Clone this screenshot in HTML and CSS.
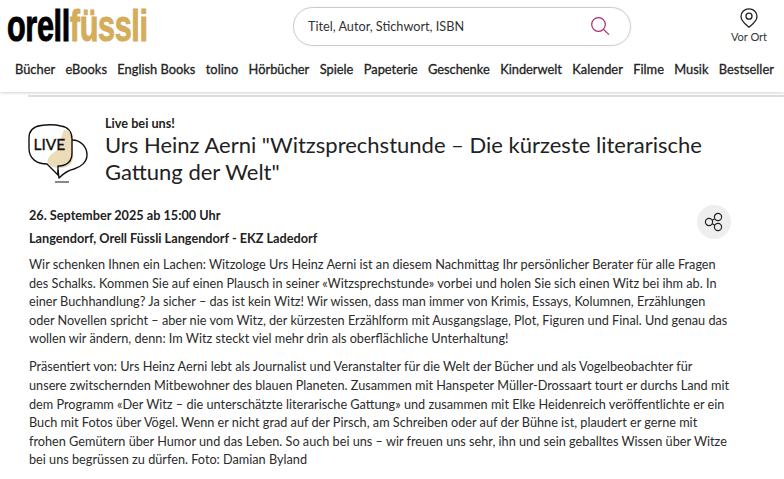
FILE: index.html
```html
<!DOCTYPE html>
<html lang="de">
<head>
  <title>Urs Heinz Aerni - Orell Füssli</title>
  <link rel="stylesheet" href="styles.css">
</head>
<body>
  <header class="site-header">
    <div class="header-top">
      <a class="logo"><span class="logo-inner"><span class="logo-black">orell</span><span class="logo-gold">füssli</span></span></a>
      <div class="search">
        <span class="search-text">Titel, Autor, Stichwort, ISBN</span>
        <svg class="search-icon" width="20" height="20" viewBox="0 0 20 20" fill="none" stroke="#a8286e" stroke-width="1.2">
          <circle cx="8.5" cy="8.5" r="6.8"/>
          <path d="M13.4 13.4 L19 18.6"/>
        </svg>
      </div>
      <div class="store">
        <svg width="18" height="20" viewBox="0 0 18 20" fill="none" stroke="#222" stroke-width="1.3">
          <path d="M9 19.2 C5.5 16.2 1 13 1 8.4 A8 7.6 0 0 1 17 8.4 C17 13 12.5 16.2 9 19.2 Z"/>
          <circle cx="9" cy="8.2" r="3"/>
        </svg>
        <span>Vor Ort</span>
      </div>
    </div>
    <nav class="main-nav">
      <a>Bücher</a>
      <a>eBooks</a>
      <a>English Books</a>
      <a>tolino</a>
      <a>Hörbücher</a>
      <a>Spiele</a>
      <a>Papeterie</a>
      <a>Geschenke</a>
      <a>Kinderwelt</a>
      <a>Kalender</a>
      <a>Filme</a>
      <a>Musik</a>
      <a>Bestseller</a>
    </nav>
  </header>

  <main class="content">
    <div class="event-head">
      <svg class="live-icon" width="60" height="60" viewBox="0 0 60 60" fill="none" stroke="#111" stroke-width="1.4">
        <path d="M36 6 C42 5 45 12 44 22 C43 26 46 30 45 35 C44 41 38 44 33 44 C28 44 22 43 20 39 C18 35 23 30 28 27 C33 23 32 14 36 6 Z" fill="#ecdcb8" stroke="none"/>
        <path d="M13 1.5 C20 0.5 27 0.5 33 2 C40 3 44 8 44 15 V29 C44 37 40 41 32 42 C31 42 30 42 30 42 V51 L19 40 C9 40 1 35 1 24 V14 C1 6 6 2.5 13 1.5 Z" stroke-linejoin="round"/>
        <path d="M44 16 C53 16 59 23 59 31 C59 38 53 43 46 45 C41 46 36 49 31 54 L30 46" stroke-linejoin="round"/>
        <path d="M27 58 H41" stroke="#555"/>
        <text x="5.5" y="26" class="live-text" fill="#111" stroke="#111" stroke-width="0.35">LIVE</text>
      </svg>
      <div>
        <div class="event-kicker">Live bei uns!</div>
        <h1 class="event-title">Urs Heinz Aerni "Witzsprechstunde – Die kürzeste literarische Gattung der Welt"</h1>
      </div>
    </div>

    <div class="event-meta">
      <div>
        <p class="meta-line">26. September 2025 ab 15:00 Uhr</p>
        <p class="meta-line">Langendorf, Orell Füssli Langendorf - EKZ Ladedorf</p>
      </div>
      <span class="share-btn">
        <svg width="20" height="20" viewBox="0 0 20 20" fill="none" stroke="#222" stroke-width="1.2">
          <circle cx="5" cy="10" r="3.6"/>
          <circle cx="14" cy="5" r="3.6"/>
          <circle cx="14" cy="15" r="3.6"/>
          <path d="M8.2 8.3 L10.9 6.8 M8.2 11.7 L10.9 13.2"/>
        </svg>
      </span>
    </div>

    <p class="event-text">Wir schenken Ihnen ein Lachen: Witzologe Urs Heinz Aerni ist an diesem Nachmittag Ihr persönlicher Berater für alle Fragen des Schalks. Kommen Sie auf einen Plausch in seiner «Witzsprechstunde» vorbei und holen Sie sich einen Witz bei ihm ab. In einer Buchhandlung? Ja sicher – das ist kein Witz! Wir wissen, dass man immer von Krimis, Essays, Kolumnen, Erzählungen oder Novellen spricht – aber nie vom Witz, der kürzesten Erzählform mit Ausgangslage, Plot, Figuren und Final. Und genau das wollen wir ändern, denn: Im Witz steckt viel mehr drin als oberflächliche Unterhaltung!</p>
    <p class="event-text">Präsentiert von: Urs Heinz Aerni lebt als Journalist und Veranstalter für die Welt der Bücher und als Vogelbeobachter für unsere zwitschernden Mitbewohner des blauen Planeten. Zusammen mit Hanspeter Müller-Drossaart tourt er durchs Land mit dem Programm «Der Witz – die unterschätzte literarische Gattung» und zusammen mit Elke Heidenreich veröffentlichte er ein Buch mit Fotos über Vögel. Wenn er nicht grad auf der Pirsch, am Schreiben oder auf der Bühne ist, plaudert er gerne mit frohen Gemütern über Humor und das Leben. So auch bei uns – wir freuen uns sehr, ihn und sein geballtes Wissen über Witze bei uns begrüssen zu dürfen. Foto: Damian Byland</p>
  </main>
</body>
</html>
```

FILE: styles.css
```css
html, body {
  margin: 0;
  padding: 0;
  height: 479px;
  overflow: hidden;
}

body {
  font-family: Lato, "Open Sans", sans-serif;
  color: #222;
  background-color: #fff;
}

.site-header {
  height: 92px;
  box-shadow: 0 1px 3px rgba(0, 0, 0, 0.18);
}

.header-top {
  display: flex;
  height: 52px;
  padding-top: 7px;
  box-sizing: border-box;
}

.logo {
  width: 293px;
  padding-left: 7px;
  box-sizing: border-box;
}

.logo-inner {
  display: inline-block;
  margin-top: -4px;
  font-family: "Liberation Sans", sans-serif;
  font-weight: bold;
  font-size: 44px;
  line-height: 46px;
  letter-spacing: -0.5px;
  transform: scaleX(0.695);
  transform-origin: left center;
  -webkit-text-stroke: 1px currentColor;
  white-space: nowrap;
}

.logo-black {
  color: #000;
}

.logo-gold {
  color: #d4ac5a;
}

.search {
  display: flex;
  align-items: center;
  justify-content: space-between;
  width: 338px;
  height: 39px;
  padding: 0 20px 1px 14px;
  box-sizing: border-box;
  border: 1px solid #ccc;
  border-radius: 20px;
  box-shadow: 0 0 2px rgba(0, 0, 0, 0.08);
}

.search-text {
  font-size: 12.7px;
  color: #333;
}

.store {
  display: flex;
  flex-direction: column;
  align-items: center;
  margin-left: 99px;
  width: 38px;
  padding-top: 1px;
  font-size: 11px;
  color: #333;
}

.store span {
  margin-top: 2px;
  white-space: nowrap;
}

.main-nav {
  display: flex;
  gap: 10.4px;
  padding: 8px 0 0 15px;
  font-size: 12.85px;
  line-height: 18px;
  color: #222;
  white-space: nowrap;
}

.main-nav a {
  -webkit-text-stroke: 0.3px #222;
}

.content {
  margin-left: 28px;
  padding: 22px 52px 0 1px;
  border-top: 2px solid #ddd;
  margin-top: 3px;
}

.event-head {
  display: flex;
  gap: 17px;
  min-height: 67px;
}

.live-icon {
  flex: none;
  margin-top: 5px;
  margin-left: -1px;
}

.event-kicker {
  font-size: 12.7px;
  font-weight: 700;
  line-height: 14px;
  margin-top: -3px;
}

.event-title {
  margin: 1px 0 0;
  font-size: 22px;
  font-weight: 400;
  line-height: 27px;
  color: #222;
}

.live-text {
  font-family: Lato, sans-serif;
  font-size: 15.5px;
  font-weight: 400;
}

.event-meta {
  display: flex;
  justify-content: space-between;
  align-items: flex-start;
  margin: 21px 1px 0 0;
}

.meta-line {
  margin: 0 0 6px;
  font-size: 12.7px;
  font-weight: 700;
  line-height: 17px;
}

.meta-line + .meta-line {
  margin-bottom: 8px;
}

.share-btn {
  display: flex;
  align-items: center;
  justify-content: center;
  width: 34px;
  height: 34px;
  margin-top: -2px;
  border-radius: 50%;
  background-color: #eee;
}

.event-text {
  margin: 0 0 9.5px;
  font-size: 12.7px;
  line-height: 18.6px;
  color: #2b2b2b;
}
```
